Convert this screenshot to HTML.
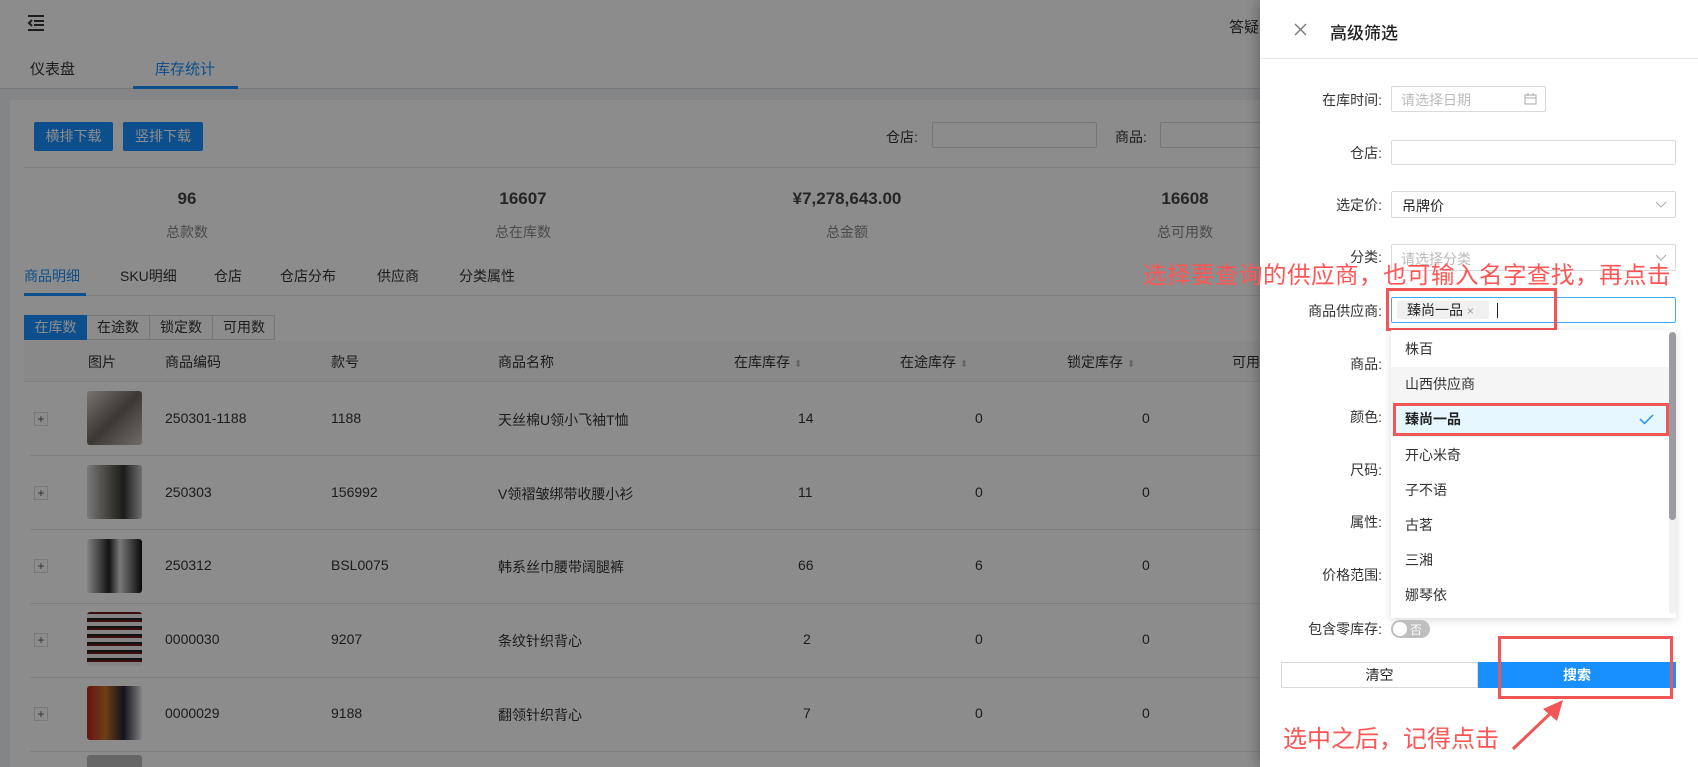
<!DOCTYPE html>
<html><head><meta charset="utf-8"><style>
*{margin:0;padding:0;box-sizing:border-box}
html{width:1698px;height:767px;overflow:hidden}
body{width:1698px;height:767px;overflow:hidden;position:relative;background:#f0f2f5;font-family:"Liberation Sans","Noto Sans CJK SC",sans-serif;font-size:14px;color:#333}
.a{position:absolute;white-space:nowrap}
.btn{position:absolute;background:#1890ff;color:#fff;font-size:14px;text-align:center;border-radius:2px}
.inp{position:absolute;border:1px solid #d9d9d9;background:#fff;border-radius:2px}
.th{position:absolute;top:352px;font-size:14px;color:#333}
.row{position:absolute;left:30px;width:1230px;border-bottom:1px solid #e8e8e8}
.img{position:absolute;left:87px;width:55px;height:54px;border-radius:3px;background:linear-gradient(135deg,#d8d2cc,#6d6660 50%,#c9c4bf)}
.plus{position:absolute;left:34px;width:14px;height:14px;border:1px solid #ddd;font-size:12px;line-height:12px;text-align:center;color:#555;background:#fff}
.lab{position:absolute;right:316px;font-size:14px;color:#333;text-align:right}
.it{position:absolute;left:1391px;width:278px;height:35px;line-height:35px;padding-left:14px;font-size:14px;color:#333}
.red{position:absolute;border:3px solid #f25555}
</style></head><body>
<div class="a" style="left:0;top:0;width:1260px;height:48px;background:#fff;box-shadow:0 1px 4px rgba(0,0,0,.1)"></div>
<svg class="a" style="left:26px;top:14px" width="20" height="18" viewBox="0 0 20 18"><path d="M2 2h16M8 7h10M8 11h10M2 16h16M6 6l-3 3 3 3" stroke="#333" stroke-width="2" fill="none"/></svg>
<div class="a" style="left:1229px;top:16px;font-size:15px">答疑</div>
<div class="a" style="left:0;top:48px;width:1260px;height:41px;background:#fff;border-bottom:1px solid #ddd"></div>
<div class="a" style="left:30px;top:58px;font-size:15px">仪表盘</div>
<div class="a" style="left:155px;top:58px;font-size:15px;color:#1890ff">库存统计</div>
<div class="a" style="left:133px;top:86px;width:105px;height:3px;background:#1890ff"></div>
<div class="a" style="left:10px;top:100px;width:1250px;height:667px;background:#fff"></div>
<div class="btn" style="left:34px;top:122px;width:79px;height:29px;line-height:29px">横排下载</div>
<div class="btn" style="left:123px;top:122px;width:80px;height:29px;line-height:29px">竖排下载</div>
<div class="a" style="left:886px;top:127px">仓店:</div>
<div class="inp" style="left:932px;top:122px;width:165px;height:26px"></div>
<div class="a" style="left:1115px;top:127px">商品:</div>
<div class="inp" style="left:1160px;top:122px;width:120px;height:26px"></div>
<div class="a" style="left:24px;top:167px;width:1236px;height:1px;background:#e8e8e8"></div>
<div class="a" style="left:187px;top:189px;font-size:17px;transform:translateX(-50%);font-weight:bold;color:#444">96</div>
<div class="a" style="left:523px;top:189px;font-size:17px;transform:translateX(-50%);font-weight:bold;color:#444">16607</div>
<div class="a" style="left:847px;top:189px;font-size:17px;transform:translateX(-50%);font-weight:bold;color:#444">¥7,278,643.00</div>
<div class="a" style="left:1185px;top:189px;font-size:17px;transform:translateX(-50%);font-weight:bold;color:#444">16608</div>
<div class="a" style="left:187px;top:222px;transform:translateX(-50%);color:#888">总款数</div>
<div class="a" style="left:523px;top:222px;transform:translateX(-50%);color:#888">总在库数</div>
<div class="a" style="left:847px;top:222px;transform:translateX(-50%);color:#888">总金额</div>
<div class="a" style="left:1185px;top:222px;transform:translateX(-50%);color:#888">总可用数</div>
<div class="a" style="left:24px;top:266px;color:#1890ff">商品明细</div>
<div class="a" style="left:120px;top:266px">SKU明细</div>
<div class="a" style="left:214px;top:266px">仓店</div>
<div class="a" style="left:280px;top:266px">仓店分布</div>
<div class="a" style="left:377px;top:266px">供应商</div>
<div class="a" style="left:459px;top:266px">分类属性</div>
<div class="a" style="left:24px;top:295px;width:1236px;height:1px;background:#e8e8e8"></div>
<div class="a" style="left:24px;top:293px;width:62px;height:3px;background:#1890ff"></div>
<div class="a" style="left:24px;top:315px;width:251px;height:25px;border:1px solid #d9d9d9;background:#fff"></div>
<div class="a" style="left:24px;top:315px;width:63px;height:25px;background:#1890ff;color:#fff;text-align:center;line-height:25px">在库数</div>
<div class="a" style="left:87px;top:315px;width:63px;height:25px;text-align:center;line-height:25px;border-right:1px solid #d9d9d9">在途数</div>
<div class="a" style="left:150px;top:315px;width:63px;height:25px;text-align:center;line-height:25px;border-right:1px solid #d9d9d9">锁定数</div>
<div class="a" style="left:213px;top:315px;width:62px;height:25px;text-align:center;line-height:25px">可用数</div>
<div class="a" style="left:24px;top:341px;width:1236px;height:41px;background:#fafafa;border-bottom:1px solid #e8e8e8"></div>
<div class="th" style="left:88px">图片</div><div class="th" style="left:165px">商品编码</div><div class="th" style="left:331px">款号</div><div class="th" style="left:498px">商品名称</div>
<div class="th" style="left:734px">在库库存 <span style="color:#bbb;font-size:10px">⬍</span></div>
<div class="th" style="left:900px">在途库存 <span style="color:#bbb;font-size:10px">⬍</span></div>
<div class="th" style="left:1067px">锁定库存 <span style="color:#bbb;font-size:10px">⬍</span></div>
<div class="th" style="left:1232px">可用</div>
<div class="row" style="top:382px;height:74px"></div>
<div class="row" style="top:456px;height:74px"></div>
<div class="row" style="top:530px;height:74px"></div>
<div class="row" style="top:604px;height:74px"></div>
<div class="row" style="top:678px;height:74px"></div>
<div class="plus" style="top:412px">+</div><div class="img" style="top:391px"></div>
<div class="a" style="left:165px;top:410px">250301-1188</div><div class="a" style="left:331px;top:410px">1188</div><div class="a" style="left:498px;top:410px">天丝棉U领小飞袖T恤</div><div class="a" style="left:798px;top:410px">14</div><div class="a" style="left:975px;top:410px">0</div><div class="a" style="left:1142px;top:410px">0</div>
<div class="plus" style="top:486px">+</div><div class="img" style="top:465px;background:linear-gradient(90deg,#ddd,#8a8478,#333,#ccc)"></div>
<div class="a" style="left:165px;top:484px">250303</div><div class="a" style="left:331px;top:484px">156992</div><div class="a" style="left:498px;top:484px">V领褶皱绑带收腰小衫</div><div class="a" style="left:798px;top:484px">11</div><div class="a" style="left:975px;top:484px">0</div><div class="a" style="left:1142px;top:484px">0</div>
<div class="plus" style="top:559px">+</div><div class="img" style="top:539px;background:linear-gradient(90deg,#eee,#222 40%,#ddd 60%,#111)"></div>
<div class="a" style="left:165px;top:557px">250312</div><div class="a" style="left:331px;top:557px">BSL0075</div><div class="a" style="left:498px;top:557px">韩系丝巾腰带阔腿裤</div><div class="a" style="left:798px;top:557px">66</div><div class="a" style="left:975px;top:557px">6</div><div class="a" style="left:1142px;top:557px">0</div>
<div class="plus" style="top:633px">+</div><div class="img" style="top:612px;background:repeating-linear-gradient(0deg,#eee 0 4px,#6b1a1a 4px 6px,#222 6px 8px)"></div>
<div class="a" style="left:165px;top:631px">0000030</div><div class="a" style="left:331px;top:631px">9207</div><div class="a" style="left:498px;top:631px">条纹针织背心</div><div class="a" style="left:803px;top:631px">2</div><div class="a" style="left:975px;top:631px">0</div><div class="a" style="left:1142px;top:631px">0</div>
<div class="plus" style="top:707px">+</div><div class="img" style="top:686px;background:linear-gradient(90deg,#b22,#c8722a,#223,#eee)"></div>
<div class="a" style="left:165px;top:705px">0000029</div><div class="a" style="left:331px;top:705px">9188</div><div class="a" style="left:498px;top:705px">翻领针织背心</div><div class="a" style="left:803px;top:705px">7</div><div class="a" style="left:975px;top:705px">0</div><div class="a" style="left:1142px;top:705px">0</div>
<div class="img" style="top:755px;height:12px;background:#bbb;border-radius:3px 3px 0 0"></div>
<div class="a" style="left:0;top:0;width:1260px;height:767px;background:rgba(0,0,0,.45)"></div>
<div class="a" style="left:1260px;top:0;width:438px;height:767px;background:#fff;box-shadow:-4px 0 10px rgba(0,0,0,.2)"></div>
<svg class="a" style="left:1294px;top:23px" width="13" height="13" viewBox="0 0 13 13"><path d="M1 1L12 12M12 1L1 12" stroke="#777" stroke-width="1.3"/></svg>
<div class="a" style="left:1330px;top:19px;font-size:17px;color:#222;font-weight:500">高级筛选</div>
<div class="a" style="left:1260px;top:58px;width:438px;height:1px;background:#e8e8e8"></div>
<div class="lab" style="top:90px">在库时间:</div>
<div class="inp" style="left:1391px;top:86px;width:155px;height:26px"><span class="a" style="left:9px;top:3px;color:#bbb">请选择日期</span><svg class="a" style="left:132px;top:6px" width="13" height="12" viewBox="0 0 13 12"><path d="M1 2h11v9H1zM1 5h11M4 0v3M9 0v3" stroke="#aaa" fill="none"/></svg></div>
<div class="lab" style="top:143px">仓店:</div>
<div class="inp" style="left:1391px;top:140px;width:285px;height:25px"></div>
<div class="lab" style="top:195px">选定价:</div>
<div class="inp" style="left:1391px;top:191px;width:285px;height:27px"><span class="a" style="left:10px;top:4px;color:#222">吊牌价</span><svg class="a" style="left:263px;top:9px" width="12" height="8" viewBox="0 0 12 8"><path d="M1 1l5 5 5-5" stroke="#aaa" fill="none"/></svg></div>
<div class="lab" style="top:247px">分类:</div>
<div class="inp" style="left:1391px;top:244px;width:285px;height:27px"><span class="a" style="left:9px;top:4px;color:#bbb">请选择分类</span><svg class="a" style="left:263px;top:9px" width="12" height="8" viewBox="0 0 12 8"><path d="M1 1l5 5 5-5" stroke="#aaa" fill="none"/></svg></div>
<div class="a" style="left:1143px;top:256px;font-size:23.5px;color:#f55;letter-spacing:0.5px">选择要查询的供应商，也可输入名字查找，再点击</div>
<div class="lab" style="top:301px">商品供应商:</div>
<div class="inp" style="left:1391px;top:297px;width:285px;height:26px;border-color:#40a9ff"><span class="a" style="left:5px;top:3px;height:18px;width:92px;background:#f0f0f0;border-radius:2px;padding-left:10px;line-height:18px;color:#222">臻尚一品 <span style="color:#999;font-size:12px">×</span></span><span class="a" style="left:105px;top:5px;width:1px;height:15px;background:#222"></span></div>
<div class="red" style="left:1386px;top:288px;width:171px;height:43px"></div>
<div class="lab" style="top:354px">商品:</div>
<div class="lab" style="top:407px">颜色:</div>
<div class="lab" style="top:460px">尺码:</div>
<div class="lab" style="top:512px">属性:</div>
<div class="lab" style="top:565px">价格范围:</div>
<div class="lab" style="top:619px">包含零库存:</div>
<div class="a" style="left:1391px;top:330px;width:285px;height:288px;background:#fff;box-shadow:0 2px 8px rgba(0,0,0,.15)"></div>
<div class="it" style="top:332px">株百</div>
<div class="it" style="top:367px;background:#f5f5f5">山西供应商</div>
<div class="it" style="top:402px;background:#e6f7ff;font-weight:bold;color:#222">臻尚一品<svg class="a" style="left:248px;top:12px" width="15" height="11" viewBox="0 0 15 11"><path d="M1 5l4.5 4.5L14 1" stroke="#1890ff" stroke-width="1.5" fill="none"/></svg></div>
<div class="it" style="top:438px">开心米奇</div>
<div class="it" style="top:473px">子不语</div>
<div class="it" style="top:508px">古茗</div>
<div class="it" style="top:543px">三湘</div>
<div class="it" style="top:578px">娜琴依</div>
<div class="a" style="left:1669px;top:332px;width:7px;height:282px;background:#f1f1f1;border-radius:4px"></div>
<div class="a" style="left:1669px;top:332px;width:7px;height:188px;background:#9a9ca2;border-radius:4px"></div>
<div class="red" style="left:1393px;top:403px;width:276px;height:33px"></div>
<div class="a" style="left:1391px;top:620px;width:39px;height:18px;background:#bfbfbf;border-radius:9px"><span class="a" style="left:2px;top:2px;width:14px;height:14px;background:#fff;border-radius:50%"></span><span class="a" style="left:19px;top:1px;font-size:12px;color:#fff">否</span></div>
<div class="a" style="left:1281px;top:662px;width:197px;height:26px;border:1px solid #d9d9d9;text-align:center;line-height:24px;color:#222">清空</div>
<div class="a" style="left:1478px;top:662px;width:198px;height:26px;background:#1890ff;text-align:center;line-height:26px;color:#fff;font-weight:bold">搜索</div>
<div class="red" style="left:1498px;top:636px;width:175px;height:63px"></div>
<svg class="a" style="left:1505px;top:695px" width="65" height="60" viewBox="0 0 65 60"><path d="M8 54L50 14" stroke="#f25555" stroke-width="3"/><path d="M58 5L38 14L52 26Z" fill="#f25555"/></svg>
<div class="a" style="left:1283px;top:719px;font-size:24px;color:#f55">选中之后，记得点击</div>
</body></html>
